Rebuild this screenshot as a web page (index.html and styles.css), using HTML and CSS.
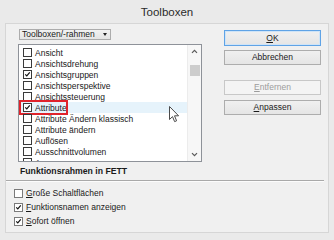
FILE: index.html
```html
<!DOCTYPE html>
<html lang="de">
<head>
<meta charset="utf-8">
<title>Toolboxen</title>
<link rel="stylesheet" href="styles.css">
</head>
<body>
<div class="window">
  <div class="titlebar"><span class="title">Toolboxen</span></div>
  <div class="client">
    <div class="top">
      <div class="left">
        <div class="dropdown"><span class="dd-label">Toolboxen/-rahmen</span><span class="caret"></span></div>
        <div class="listbox">
          <ul class="items">
            <li class="item"><span class="cb"></span><span>Ansicht</span></li>
            <li class="item"><span class="cb"></span><span>Ansichtsdrehung</span></li>
            <li class="item"><span class="cb checked"><svg viewBox="0 0 9 9"><path d="M1.6 4.4 L3.6 6.4 L7.4 1.8"/></svg></span><span>Ansichtsgruppen</span></li>
            <li class="item"><span class="cb"></span><span>Ansichtsperspektive</span></li>
            <li class="item"><span class="cb"></span><span>Ansichtssteuerung</span></li>
            <li class="item hl"><span class="cb checked"><svg viewBox="0 0 9 9"><path d="M1.6 4.4 L3.6 6.4 L7.4 1.8"/></svg></span><span>Attribute</span><span class="marker"></span></li>
            <li class="item"><span class="cb"></span><span>Attribute Ändern klassisch</span></li>
            <li class="item"><span class="cb"></span><span>Attribute ändern</span></li>
            <li class="item"><span class="cb"></span><span>Auflösen</span></li>
            <li class="item"><span class="cb"></span><span>Ausschnittvolumen</span></li>
            <li class="item"><span class="cb"></span><span>Aussparung</span></li>
          </ul>
          <div class="scrollbar">
            <span class="arrow"><svg viewBox="0 0 7 5"><path d="M1 3.8 L3.5 1.3 L6 3.8"/></svg></span>
            <div class="track"><div class="thumb"></div></div>
            <span class="arrow"><svg viewBox="0 0 7 5"><path d="M1 1.2 L3.5 3.7 L6 1.2"/></svg></span>
          </div>
          <svg class="cursor" viewBox="0 0 11 17"><path d="M0.5 0.5 L0.5 13.5 L3.5 10.6 L5.6 15.6 L7.6 14.8 L5.5 9.8 L9.6 9.8 Z"/></svg>
        </div>
      </div>
      <div class="buttons">
        <button class="btn default"><u>O</u>K</button>
        <button class="btn gap-s">Abbrechen</button>
        <button class="btn disabled gap-l"><u>E</u>ntfernen</button>
        <button class="btn gap-m"><u>A</u>npassen</button>
      </div>
    </div>
    <div class="caption">Funktionsrahmen in FETT</div>
    <div class="sep"></div>
    <div class="options">
      <div class="opt"><span class="cb light"></span><span><u>G</u>roße Schaltflächen</span></div>
      <div class="opt"><span class="cb light checked"><svg viewBox="0 0 9 9"><path d="M1.6 4.4 L3.6 6.4 L7.4 1.8"/></svg></span><span><u>F</u>unktionsnamen anzeigen</span></div>
      <div class="opt"><span class="cb light checked"><svg viewBox="0 0 9 9"><path d="M1.6 4.4 L3.6 6.4 L7.4 1.8"/></svg></span><span><u>S</u>ofort öffnen</span></div>
    </div>
  </div>
</div>
</body>
</html>
```
FILE: styles.css
```css
html, body {
  margin: 0;
  padding: 0;
}
body {
  width: 334px;
  height: 240px;
  overflow: hidden;
  background: #eaeaea;
  font-family: "Liberation Sans", Arial, sans-serif;
  font-size: 8.5px;
  color: #1a1a1a;
}
.window {
  height: 240px;
  box-sizing: border-box;
  padding: 0 5px 7px 5px;
  display: flex;
  flex-direction: column;
}
.titlebar {
  height: 23px;
  display: flex;
  align-items: center;
  justify-content: center;
  font-size: 11.5px;
  color: #2a2a2a;
  padding-top: 1px;
  box-sizing: border-box;
}
.client {
  flex: 1;
  background: #f0f0f0;
  border: 1px solid #d6d6d6;
  display: flex;
  flex-direction: column;
}
.top {
  display: flex;
}
.left {
  margin-left: 12px;
  width: 184px;
  display: flex;
  flex-direction: column;
}
.dropdown {
  margin: 5px 0 0 1px;
  width: 92px;
  height: 11px;
  box-sizing: border-box;
  border: 1px solid #acacac;
  background: linear-gradient(#f2f2f2, #e4e4e4);
  display: flex;
  align-items: center;
  padding-left: 2px;
}
.dd-label {
  line-height: 9px;
}
.caret {
  margin-left: 8px;
  width: 0;
  height: 0;
  border-left: 2.5px solid transparent;
  border-right: 2.5px solid transparent;
  border-top: 3px solid #222;
}
.listbox {
  position: relative;
  margin-top: 4px;
  height: 118px;
  box-sizing: border-box;
  border: 1px solid #8e9299;
  background: #fff;
  display: flex;
  overflow: hidden;
}
.items {
  flex: 1;
  list-style: none;
  margin: 0;
  padding: 2px 0 0 0;
}
.item {
  position: relative;
  height: 11px;
  display: flex;
  align-items: center;
  padding-left: 4px;
  gap: 3px;
  white-space: nowrap;
}
.item.hl {
  background: #e6f3fb;
}
.cb {
  width: 9px;
  height: 9px;
  box-sizing: border-box;
  border: 1px solid #3a3a3a;
  background: #fff;
  flex: none;
  display: flex;
}
.cb svg {
  width: 7px;
  height: 7px;
}
.cb svg path {
  fill: none;
  stroke: #111;
  stroke-width: 1.5;
}
.cb.light {
  border-color: #7a7a7a;
}
.marker {
  position: absolute;
  left: 0;
  top: -2px;
  width: 49px;
  height: 15px;
  box-sizing: border-box;
  border: 2px solid #e0232b;
}
.scrollbar {
  width: 13px;
  flex: none;
  background: #f7f7f7;
  border-left: 1px solid #ececec;
  display: flex;
  flex-direction: column;
  align-items: center;
}
.arrow {
  height: 13px;
  display: flex;
  align-items: center;
  justify-content: center;
}
.arrow svg {
  width: 7px;
  height: 5px;
}
.arrow svg path {
  fill: none;
  stroke: #5a5a5a;
  stroke-width: 1.2;
}
.track {
  flex: 1;
  width: 100%;
  display: flex;
  justify-content: center;
}
.thumb {
  margin-top: 7px;
  width: 10px;
  height: 11px;
  background: #cdcdcd;
}
.cursor {
  position: absolute;
  left: 150px;
  top: 61px;
  width: 11px;
  height: 17px;
}
.cursor path {
  fill: #fff;
  stroke: #4a4a4a;
  stroke-width: 1;
  stroke-linejoin: round;
}
.buttons {
  margin-left: 22px;
  margin-top: 6px;
  width: 97px;
  display: flex;
  flex-direction: column;
}
.btn {
  height: 15px;
  padding: 0;
  margin: 0;
  border: 1px solid #adadad;
  background: linear-gradient(#f0f0f0, #e5e5e5);
  font: inherit;
  color: #1a1a1a;
  text-align: center;
  line-height: 13px;
}
.btn.default {
  height: 16px;
  border-color: #5fa3e6;
  box-shadow: inset 0 0 0 1px #cfe4f7;
}
.btn.disabled {
  color: #9c9c9c;
  border-color: #c8c8c8;
  background: #f4f4f4;
}
.gap-s { margin-top: 4px; }
.gap-l { margin-top: 15px; }
.gap-m { margin-top: 5px; }
.caption {
  margin: 4px 0 0 14px;
  height: 11px;
  line-height: 11px;
  font-weight: bold;
  font-size: 8.7px;
  color: #1a1a1a;
}
.sep {
  margin: 3px 4px 0 0;
  height: 1px;
  background: #a9a9a9;
  border-bottom: 1px solid #fcfcfc;
}
.options {
  margin-top: 4px;
  padding-left: 8px;
  display: flex;
  flex-direction: column;
}
.opt {
  height: 14px;
  display: flex;
  align-items: center;
  gap: 3px;
}
u {
  text-decoration: underline;
  text-underline-offset: 1px;
}
```
